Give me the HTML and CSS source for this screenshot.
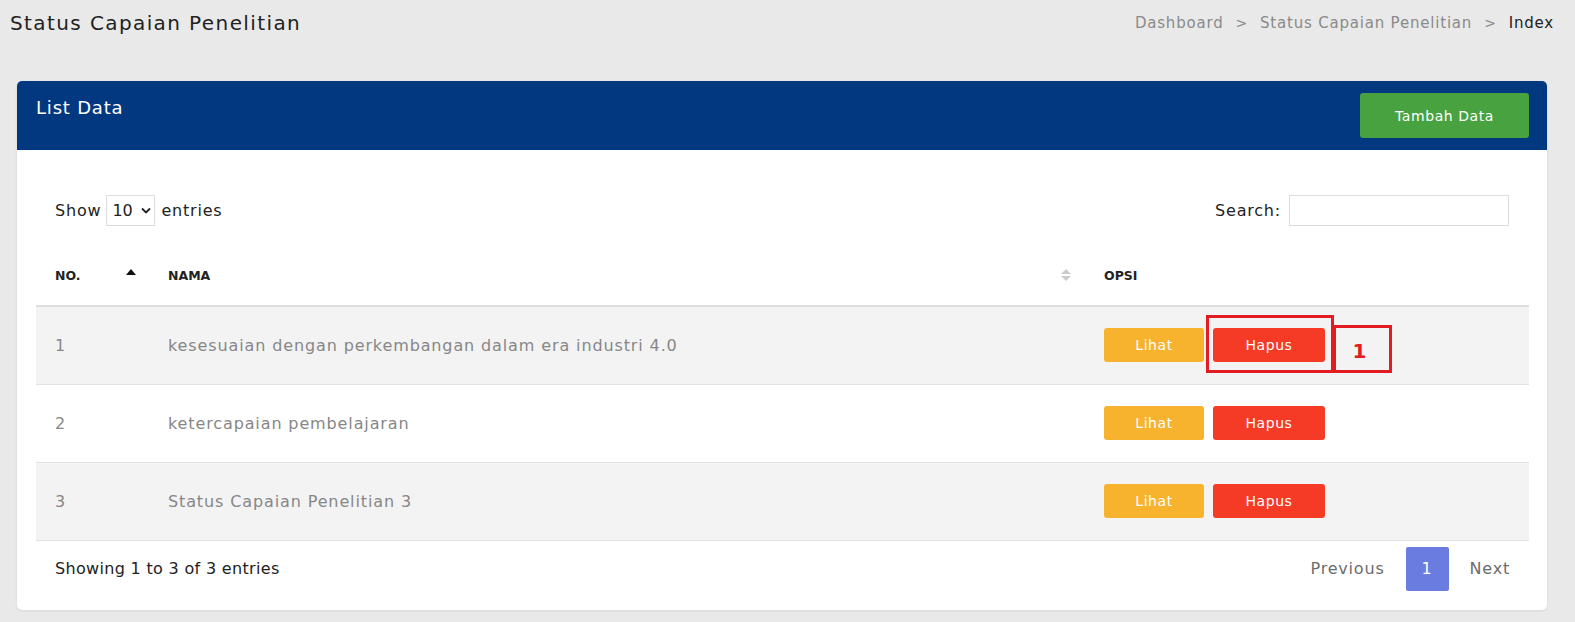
FILE: index.html
```html
<!DOCTYPE html>
<html>
<head>
<meta charset="utf-8">
<link rel="stylesheet" href="styles.css">
</head>
<body>
<div class="topbar">
  <h1 class="page-title">Status Capaian Penelitian</h1>
  <nav class="crumbs">
    <span class="crumb">Dashboard</span>
    <span class="sep">&gt;</span>
    <span class="crumb">Status Capaian Penelitian</span>
    <span class="sep">&gt;</span>
    <span class="crumb current">Index</span>
  </nav>
</div>

<section class="card">
  <header class="card-head">
    <h2 class="card-title">List Data</h2>
    <button class="btn btn-green">Tambah Data</button>
  </header>
  <div class="card-body">
    <div class="controls">
      <label class="len">Show
        <span class="select">10
          <svg width="10" height="7" viewBox="0 0 10 7"><path d="M1 1.5l4 4 4-4" fill="none" stroke="#222" stroke-width="1.8"/></svg>
        </span>
        entries</label>
      <label class="search">Search: <span class="input"></span></label>
    </div>
    <table class="tbl">
      <thead>
        <tr>
          <th class="c-no">NO.<span class="sort-up"></span></th>
          <th class="c-name">NAMA<span class="sort-both"><i class="up"></i><i class="down"></i></span></th>
          <th class="c-opt">OPSI</th>
        </tr>
      </thead>
      <tbody>
        <tr class="odd">
          <td class="c-no">1</td>
          <td class="c-name">kesesuaian dengan perkembangan dalam era industri 4.0</td>
          <td class="c-opt"><div class="acts"><button class="btn btn-sm btn-yellow">Lihat</button><button class="btn btn-sm btn-red">Hapus</button></div></td>
        </tr>
        <tr>
          <td class="c-no">2</td>
          <td class="c-name">ketercapaian pembelajaran</td>
          <td class="c-opt"><div class="acts"><button class="btn btn-sm btn-yellow">Lihat</button><button class="btn btn-sm btn-red">Hapus</button></div></td>
        </tr>
        <tr class="odd">
          <td class="c-no">3</td>
          <td class="c-name">Status Capaian Penelitian 3</td>
          <td class="c-opt"><div class="acts"><button class="btn btn-sm btn-yellow">Lihat</button><button class="btn btn-sm btn-red">Hapus</button></div></td>
        </tr>
      </tbody>
    </table>
    <div class="foot">
      <div class="info">Showing 1 to 3 of 3 entries</div>
      <div class="pager">
        <span class="pg">Previous</span>
        <span class="pg active">1</span>
        <span class="pg">Next</span>
      </div>
    </div>
  </div>
</section>

<div class="mark mark-a"></div>
<div class="mark mark-b">1</div>
</body>
</html>
```
FILE: styles.css
```css
* { box-sizing: border-box; }
html, body { margin: 0; padding: 0; }
body {
  background: #e9e9e9;
  font-family: "DejaVu Sans", "Inter", sans-serif;
  letter-spacing: 0.05em;
  color: #212529;
  width: 1575px;
  height: 622px;
  overflow: hidden;
  position: relative;
}
.topbar {
  display: flex;
  justify-content: space-between;
  align-items: center;
  padding: 0 21px 0 10px;
  height: 45px;
}
.page-title {
  margin: 0;
  font-size: 20px;
  font-weight: 400;
  letter-spacing: 0.07em;
  color: #222;
}
.crumbs {
  display: flex;
  gap: 12px;
  font-size: 15px;
  color: #8a8a8a;
  align-items: center;
}
.crumbs .sep { font-size: 14px; color: #888; }
.crumbs .current { color: #222; }

.card {
  margin: 36px 28px 0 17px;
  background: #fff;
  border-radius: 5px;
  box-shadow: 0 1px 3px rgba(0,0,0,0.08);
  height: 529px;
}
.card-head {
  background: #02387f;
  border-radius: 5px 5px 0 0;
  height: 69px;
  display: flex;
  justify-content: space-between;
  align-items: flex-start;
  padding: 12px 18px 0 19px;
}
.card-title {
  margin: 0;
  padding-top: 4px;
  font-size: 18px;
  font-weight: 400;
  color: #fff;
}
.btn {
  border: 0;
  font-family: inherit;
  letter-spacing: 0.04em;
  color: #fff;
  border-radius: 3px;
  cursor: pointer;
}
.btn-green {
  background: #48a23f;
  width: 169px;
  height: 45px;
  font-size: 14px;
  font-weight: 400;
}
.card-body { padding: 0 18px 0 19px; }
.controls {
  display: flex;
  justify-content: space-between;
  align-items: center;
  padding-top: 45px;
  height: 75px;
  padding-left: 19px;
  padding-right: 20px;
}
.len, .search {
  display: flex;
  align-items: center;
  font-size: 16px;
  color: #222;
}
.select {
  display: inline-flex;
  align-items: center;
  gap: 8px;
  margin: 0 6px 0 5px;
  width: 49px;
  height: 31px;
  border: 1px solid #ddd;
  padding-left: 5px;
  font-size: 16px;
  letter-spacing: 0;
}
.input {
  display: inline-block;
  width: 220px;
  height: 31px;
  border: 1px solid #ddd;
  margin-left: 8px;
}
.tbl {
  width: 100%;
  border-collapse: collapse;
  table-layout: fixed;
  margin-top: 20px;
}
.tbl th {
  height: 61px;
  text-align: left;
  font-size: 12.5px;
  font-weight: 700;
  letter-spacing: 0;
  color: #222;
  border-bottom: 2px solid #dedede;
  position: relative;
  padding: 0 0 0 19px;
}
.tbl th.c-no { width: 113px; }
.tbl th.c-name { width: 936px; }
.sort-up {
  position: absolute;
  right: 13px;
  top: 24px;
  width: 0; height: 0;
  border-left: 5px solid transparent;
  border-right: 5px solid transparent;
  border-bottom: 6px solid #111;
}
.sort-both {
  position: absolute;
  right: 14px;
  top: 24px;
  display: flex;
  flex-direction: column;
  gap: 2px;
}
.sort-both i {
  display: block;
  width: 0; height: 0;
  border-left: 5px solid transparent;
  border-right: 5px solid transparent;
}
.sort-both .up { border-bottom: 5px solid #ccc; }
.sort-both .down { border-top: 5px solid #ccc; }
.tbl td {
  height: 78px;
  padding: 0 0 0 19px;
  font-size: 16px;
  letter-spacing: 0.055em;
  color: #878787;
  border-bottom: 1px solid #e2e2e2;
}
.tbl tr.odd td { background: #f3f3f3; }
.acts { display: flex; gap: 9px; }
.btn-sm {
  height: 34px;
  font-size: 14px;
  font-weight: 400;
}
.btn-yellow { background: #f7b32d; width: 100px; }
.btn-red { background: #f53a26; width: 112px; }
.foot {
  display: flex;
  justify-content: space-between;
  align-items: center;
  padding: 6px 19px 0 19px;
}
.info { font-size: 16px; color: #222; letter-spacing: 0.02em; }
.pager { display: flex; align-items: center; }
.pg {
  font-size: 16px;
  color: #6c6c6c;
  padding: 0 21px;
  height: 44px;
  display: flex;
  align-items: center;
}
.pg:last-child { padding-right: 0; }
.pg.active {
  background: #6a7cdf;
  color: #fff;
  border-radius: 2px;
  padding: 0 16px;
}
.mark {
  position: absolute;
  border: 3px solid #e31b23;
}
.mark-a {
  left: 1206px; top: 315px; width: 128px; height: 58px;
}
.mark-b {
  left: 1333px; top: 325px; width: 59px; height: 48px;
  color: #e31b23;
  font-weight: 700;
  font-size: 20px;
  letter-spacing: 0;
  display: flex;
  align-items: center;
  justify-content: center;
  padding: 4px 6px 0 0;
}
```
